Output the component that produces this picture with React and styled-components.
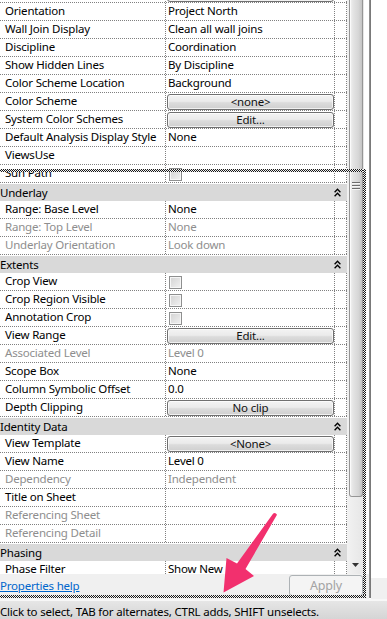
import React from "react";
import styled, { createGlobalStyle } from "styled-components";

const FONT = `"Noto Sans", "DejaVu Sans", sans-serif`;

const Global = createGlobalStyle`
  html, body { margin: 0; padding: 0; background: #ffffff; }
  body { font-family: ${FONT}; font-size: 11.5px; letter-spacing: -0.2px; }
`;

const Page = styled.div`
  position: relative;
  width: 387px;
  height: 619px;
  overflow: hidden;
  display: flex;
  flex-direction: column;
  font-family: ${FONT};
  font-size: 11.5px;
  letter-spacing: -0.2px;
  color: #000;
`;

const Main = styled.div`
  display: flex;
  height: 599px;
`;

const Palette = styled.div`
  width: 369px;
  display: flex;
  flex-direction: column;
  background: #f0f0f0;
`;

const GridArea = styled.div`
  height: 574px;
  display: flex;
  background: #ffffff;
  padding-right: 5px;
`;

const Table = styled.div`
  width: 347px;
  overflow: hidden;
`;

const Rows = styled.div`
  margin-top: -15px;
`;

const Row = styled.div`
  display: grid;
  grid-template-columns: 166px 169px 12px;
  height: 18px;
  box-sizing: border-box;
  border-bottom: 1px dotted #808080;
  background: #fff;
`;

const Cell = styled.div`
  box-sizing: border-box;
  border-right: 1px dotted #808080;
  white-space: nowrap;
  overflow: hidden;
  line-height: 15px;
  color: ${(p) => (p.$muted ? "#8e8e8e" : "#000")};
`;

const LabelCell = styled(Cell)`
  padding-left: 5px;
`;

const ValueCell = styled(Cell)`
  padding-left: 2px;
`;

const ControlCell = styled(Cell)`
  padding-left: 1px;
`;

const Header = styled.div`
  display: flex;
  align-items: center;
  justify-content: space-between;
  height: 18px;
  box-sizing: border-box;
  border-top: 1px solid #ffffff;
  background: #d9d9d9;
  padding: 0 6px 1px 0;
  line-height: 15px;
`;

const PropButton = styled.div`
  box-sizing: border-box;
  width: 167px;
  height: 16px;
  margin-top: 1px;
  border: 1px solid #707070;
  border-radius: 3px;
  background: linear-gradient(#f3f3f3 0%, #ebebeb 45%, #dcdcdc 55%, #cfcfcf 100%);
  box-shadow: inset 0 0 0 1px rgba(255, 255, 255, 0.7);
  text-align: center;
  line-height: 13px;
  color: #111;
`;

const Check = styled.div`
  box-sizing: border-box;
  width: 13px;
  height: 13px;
  margin: 3px 0 0 2px;
  border: 1px solid #8e8f8f;
  background: linear-gradient(135deg, #d2d2d2, #f2f2f2);
  box-shadow: inset 0 0 0 1px #f6f6f6;
`;

const ScrollBar = styled.div`
  width: 17px;
  display: flex;
  flex-direction: column;
  background: linear-gradient(to right, #f2f2f2, #e6e6e6);
`;

const Thumb = styled.div`
  box-sizing: border-box;
  height: 497px;
  margin: 0 1px 0 2px;
  border: 1px solid #959595;
  border-top: none;
  border-radius: 0 0 3px 3px;
  background: linear-gradient(to right, #f4f4f4 0%, #e4e4e4 25%, #d6d6d6 70%, #c4c4c4 100%);
  box-shadow: inset 1px 0 0 #fafafa;
  display: flex;
  flex-direction: column;
  align-items: center;
  padding-top: 182px;
`;

const Track = styled.div`
  flex: 1;
`;

const ArrowButton = styled.div`
  height: 19px;
  display: flex;
  align-items: center;
  justify-content: center;
`;

const Footer = styled.div`
  flex: 1;
  display: flex;
  align-items: flex-start;
  justify-content: space-between;
  padding-top: 1px;
  background: #f0f0f0;
`;

const HelpLink = styled.a`
  color: #0066cc;
  text-decoration: underline;
  line-height: 21px;
  cursor: pointer;
`;

const ApplyButton = styled.div`
  box-sizing: border-box;
  width: 74px;
  height: 21px;
  margin-right: 6px;
  border: 1px solid #adb2b5;
  border-radius: 3px;
  background: #f4f4f4;
  color: #a3a3a3;
  text-align: center;
  line-height: 19px;
  font-size: 12.5px;
`;

const DockEdge = styled.div`
  width: 2px;
  height: 598px;
  background: linear-gradient(to right, #9a9a9a, #6f6f6f);
`;

const Canvas = styled.div`
  flex: 1;
  display: flex;
  flex-direction: column;
`;

const CanvasView = styled.div`
  flex: 1;
  background: #ffffff;
`;

const CanvasStrip = styled.div`
  height: 21px;
  background: #f0f0f0;
`;

const StatusBar = styled.div`
  flex: 1;
  box-sizing: border-box;
  border-top: 2px solid #f7f7f7;
  background: linear-gradient(#e6e6e6, #d5d5d5);
  padding: 4px 0 0 0;
  line-height: 14px;
  white-space: nowrap;
`;

const Frame = styled.div`
  position: absolute;
  left: -4px;
  top: 169px;
  width: 370px;
  height: 429px;
  pointer-events: none;
`;

const checker = `repeating-conic-gradient(#1a1a1a 0 25%, #f2f2f2 0 50%) 0 0 / 2px 2px`;

const FrameEdge = styled.div`
  position: absolute;
  background: ${checker};
  ${(p) =>
    p.$side === "top"
      ? "left:0; right:0; top:0; height:3px;"
      : p.$side === "bottom"
      ? "left:0; right:0; bottom:0; height:3px;"
      : "top:0; bottom:0; right:0; width:3px;"}
`;

const ArrowLayer = styled.svg`
  position: absolute;
  left: 0;
  top: 0;
  pointer-events: none;
`;

const Chevrons = () => (
  <svg width="7" height="9" viewBox="0 0 7 9">
    <polyline points="0.6,4.2 3.5,1.2 6.4,4.2" fill="none" stroke="#000" strokeWidth="1.3" />
    <polyline points="0.6,8.2 3.5,5.2 6.4,8.2" fill="none" stroke="#000" strokeWidth="1.3" />
  </svg>
);

const Grip = () => (
  <svg width="8" height="10" viewBox="0 0 8 10">
    {[1, 4, 7].map((y) => (
      <g key={y}>
        <rect x="0" y={y - 1} width="8" height="1" fill="#6e6e6e" />
        <rect x="0" y={y} width="8" height="1" fill="#f6f6f6" />
      </g>
    ))}
  </svg>
);

const rows = [
  { label: "", button: "" },
  { label: "Orientation", value: "Project North" },
  { label: "Wall Join Display", value: "Clean all wall joins" },
  { label: "Discipline", value: "Coordination" },
  { label: "Show Hidden Lines", value: "By Discipline" },
  { label: "Color Scheme Location", value: "Background" },
  { label: "Color Scheme", button: "<none>" },
  { label: "System Color Schemes", button: "Edit..." },
  { label: "Default Analysis Display Style", value: "None" },
  { label: "ViewsUse", value: "" },
  { label: "Sun Path", check: true },
  { header: "Underlay" },
  { label: "Range: Base Level", value: "None" },
  { label: "Range: Top Level", value: "None", muted: true },
  { label: "Underlay Orientation", value: "Look down", muted: true },
  { header: "Extents" },
  { label: "Crop View", check: true },
  { label: "Crop Region Visible", check: true },
  { label: "Annotation Crop", check: true },
  { label: "View Range", button: "Edit..." },
  { label: "Associated Level", value: "Level 0", muted: true },
  { label: "Scope Box", value: "None" },
  { label: "Column Symbolic Offset", value: "0.0" },
  { label: "Depth Clipping", button: "No clip" },
  { header: "Identity Data" },
  { label: "View Template", button: "<None>" },
  { label: "View Name", value: "Level 0" },
  { label: "Dependency", value: "Independent", muted: true },
  { label: "Title on Sheet", value: "" },
  { label: "Referencing Sheet", value: "", muted: true },
  { label: "Referencing Detail", value: "", muted: true },
  { header: "Phasing" },
  { label: "Phase Filter", value: "Show New" },
];

const PropRow = ({ r }) => {
  if (r.header) {
    return (
      <Header>
        <span>{r.header}</span>
        <Chevrons />
      </Header>
    );
  }
  let value;
  if (r.button !== undefined) {
    value = (
      <ControlCell>
        <PropButton>{r.button}</PropButton>
      </ControlCell>
    );
  } else if (r.check) {
    value = (
      <ControlCell>
        <Check />
      </ControlCell>
    );
  } else {
    value = <ValueCell $muted={r.muted}>{r.value}</ValueCell>;
  }
  return (
    <Row>
      <LabelCell $muted={r.muted}>{r.label}</LabelCell>
      {value}
      <Cell />
    </Row>
  );
};

export default function App() {
  return (
    <>
      <Global />
      <Page>
        <Main>
          <Palette>
            <GridArea>
              <Table>
                <Rows>
                  {rows.map((r, i) => (
                    <PropRow key={i} r={r} />
                  ))}
                </Rows>
              </Table>
              <ScrollBar>
                <Thumb>
                  <Grip />
                </Thumb>
                <Track />
                <ArrowButton>
                  <svg width="7" height="4" viewBox="0 0 7 4">
                    <polygon points="0,0 7,0 3.5,4" fill="#333" />
                  </svg>
                </ArrowButton>
              </ScrollBar>
            </GridArea>
            <Footer>
              <HelpLink>Properties help</HelpLink>
              <ApplyButton>Apply</ApplyButton>
            </Footer>
          </Palette>
          <DockEdge />
          <Canvas>
            <CanvasView />
            <CanvasStrip />
          </Canvas>
        </Main>
        <StatusBar>Click to select, TAB for alternates, CTRL adds, SHIFT unselects.</StatusBar>
        <Frame>
          <FrameEdge $side="top" />
          <FrameEdge $side="right" />
          <FrameEdge $side="bottom" />
        </Frame>
        <ArrowLayer width="387" height="619" viewBox="0 0 387 619">
          <path
            d="M273.2 513.6 Q275.5 512.2 277 514.8 L245.5 569 L254 576 L223.5 592.5 L226.5 558 L237 563.5 Z"
            fill="#f2306e"
          />
        </ArrowLayer>
      </Page>
    </>
  );
}
